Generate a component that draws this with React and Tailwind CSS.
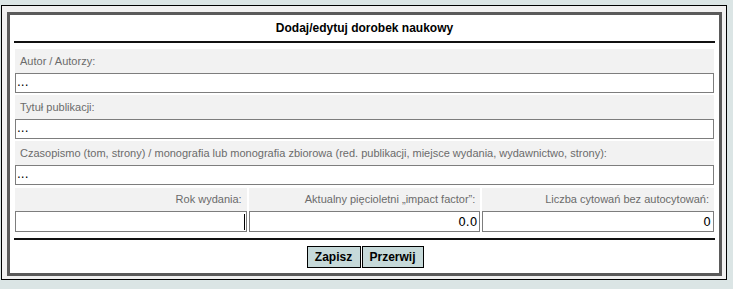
import React from 'react';

const font = { fontFamily: '"Liberation Sans", Arial, sans-serif' };
const valueFont = { fontFamily: '"DejaVu Sans", Verdana, sans-serif' };

const TextRow = ({ label, value }) => (
  <div className="flex flex-col">
    <div className="h-[24px] bg-[#f2f2f2] pl-[5px] pt-[6px] text-[11px] leading-[13px] text-[#6b6b6b]">{label}</div>
    <div className="h-[20px] border border-[#7d7d7d] bg-white pl-[1px] text-[12px] leading-[17px] text-black" style={valueFont}>
      {value}
    </div>
  </div>
);

const NumCell = ({ label, value, caret }) => (
  <div className="flex flex-col">
    <div className="h-[23px] bg-[#f2f2f2] pr-[5px] pt-[5px] text-right text-[11px] leading-[13px] text-[#6b6b6b]">{label}</div>
    <div
      className="flex h-[21px] items-center justify-end border border-[#7d7d7d] bg-white pr-[2px] text-[12px] text-black"
      style={valueFont}
    >
      {caret ? <span className="mr-[-1px] h-[16px] w-[1px] bg-black" /> : value}
    </div>
  </div>
);

export default function App() {
  return (
    <div className="min-h-[289px] bg-[#dbe5e5] pt-[5px] pl-[1px]" style={font}>
      <div className="w-[726px] border border-black bg-[#f0f0f0] pt-[6px] pb-[3px] pl-[5px] pr-[4px]">
        <div className="border-[3px] border-[#5a5a5a] bg-white px-[4px] pb-[5px]">
          <div className="flex h-[26px] items-center justify-center text-[12px] font-bold text-black">
            Dodaj/edytuj dorobek naukowy
          </div>
          <div className="h-[2px] bg-[#111]" />
          <div className="mt-[6px] flex flex-col gap-[2px] px-[1px]">
            <TextRow label="Autor / Autorzy:" value="..." />
            <TextRow label="Tytuł publikacji:" value="..." />
            <TextRow
              label="Czasopismo (tom, strony) / monografia lub monografia zbiorowa (red. publikacji, miejsce wydania, wydawnictwo, strony):"
              value="..."
            />
            <div className="mt-[1px] grid grid-cols-3 gap-x-[2px]">
              <NumCell label="Rok wydania:" caret />
              <NumCell label="Aktualny pięcioletni „impact factor”:" value="0.0" />
              <NumCell label="Liczba cytowań bez autocytowań:" value="0" />
            </div>
          </div>
          <div className="mt-[6px] h-[2px] bg-[#111]" />
          <div className="mt-[6px] flex justify-center gap-[1px] pl-[1px]">
            <button className="h-[22px] w-[54px] border border-black bg-[#c6d9d9] text-[12px] font-bold text-black">Zapisz</button>
            <button className="h-[22px] w-[62px] border border-black bg-[#c6d9d9] text-[12px] font-bold text-black">Przerwij</button>
          </div>
        </div>
      </div>
    </div>
  );
}
